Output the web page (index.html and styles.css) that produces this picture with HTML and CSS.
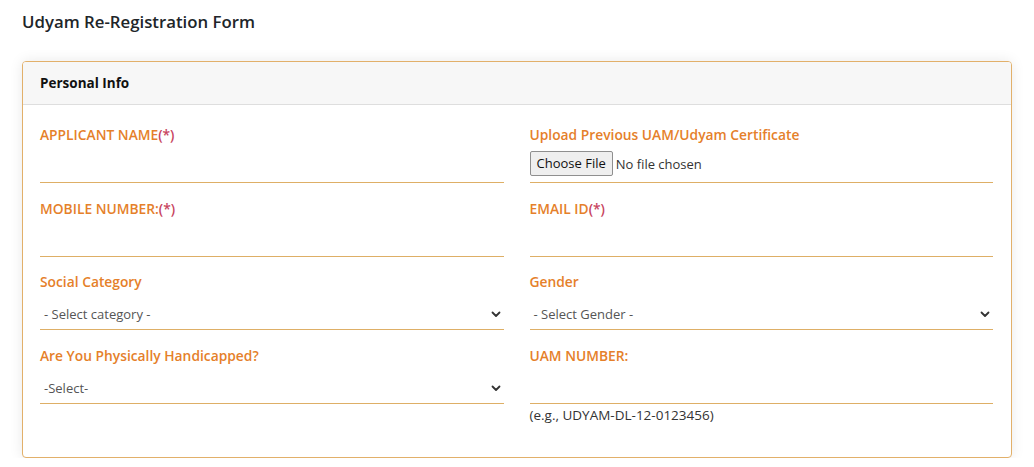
FILE: index.html
```html
<!DOCTYPE html>
<html lang="en">
<head>
<meta charset="utf-8">
<title>Udyam Re-Registration Form</title>
<link rel="stylesheet" href="styles.css">
</head>
<body>
<h1 class="page-title">Udyam Re-Registration Form</h1>
<section class="card">
  <header class="card-header">Personal Info</header>
  <div class="card-body">
    <div class="field">
      <label class="label">APPLICANT NAME<span class="req">(*)</span></label>
      <div class="control"></div>
    </div>
    <div class="field">
      <label class="label">Upload Previous UAM/Udyam Certificate</label>
      <div class="control">
        <span class="file-btn">Choose File</span>
        <span class="file-name">No file chosen</span>
      </div>
    </div>
    <div class="field">
      <label class="label">MOBILE NUMBER:<span class="req">(*)</span></label>
      <div class="control"></div>
    </div>
    <div class="field">
      <label class="label">EMAIL ID<span class="req">(*)</span></label>
      <div class="control"></div>
    </div>
    <div class="field">
      <label class="label">Social Category</label>
      <div class="control select">
        <span class="select-text">- Select category -</span>
        <svg class="chev" width="10" height="7" viewBox="0 0 10 7"><path d="M1.5 1.5 L5 5 L8.5 1.5" fill="none" stroke="#333" stroke-width="1.8" stroke-linecap="round" stroke-linejoin="round"/></svg>
      </div>
    </div>
    <div class="field">
      <label class="label">Gender</label>
      <div class="control select">
        <span class="select-text">- Select Gender -</span>
        <svg class="chev" width="10" height="7" viewBox="0 0 10 7"><path d="M1.5 1.5 L5 5 L8.5 1.5" fill="none" stroke="#333" stroke-width="1.8" stroke-linecap="round" stroke-linejoin="round"/></svg>
      </div>
    </div>
    <div class="field">
      <label class="label">Are You Physically Handicapped?</label>
      <div class="control select">
        <span class="select-text">-Select-</span>
        <svg class="chev" width="10" height="7" viewBox="0 0 10 7"><path d="M1.5 1.5 L5 5 L8.5 1.5" fill="none" stroke="#333" stroke-width="1.8" stroke-linecap="round" stroke-linejoin="round"/></svg>
      </div>
    </div>
    <div class="field">
      <label class="label">UAM NUMBER:</label>
      <div class="control"></div>
      <div class="hint">(e.g., UDYAM-DL-12-0123456)</div>
    </div>
  </div>
</section>
</body>
</html>
```
FILE: styles.css
```css
* { box-sizing: border-box; }
html, body { margin: 0; background: #fff; }
body {
  padding: 8px 22px 0;
  font-family: "Open Sans", "Noto Sans", "Liberation Sans", sans-serif;
  color: #212529;
}
.page-title {
  margin: 0 0 25px;
  font-size: 16.8px;
  line-height: 28px;
  font-weight: 600;
  color: #212529;
}
.card {
  border: 1px solid #e2b06a;
  border-radius: 4px;
  background: #fff;
  box-shadow: 0 0 14px rgba(0, 0, 0, 0.09);
  overflow: hidden;
}
.card-header {
  background: #f7f7f7;
  border-bottom: 1px solid #dedede;
  padding: 11px 17px 10px;
  font-size: 13.5px;
  line-height: 21px;
  font-weight: 700;
  color: #111;
}
.card-body {
  display: grid;
  grid-template-columns: 1fr 1fr;
  column-gap: 26px;
  padding: 19px 18px 16px 17px;
}
.field {
  display: flex;
  flex-direction: column;
  margin-bottom: 14.7px;
}
.label {
  font-size: 13.8px;
  line-height: 21px;
  font-weight: 600;
  color: #e5802a;
}
.req { color: #c8445e; }
.control {
  height: 38px;
  border-bottom: 1.5px solid #deaf66;
  display: flex;
  align-items: center;
}
.file-btn {
  font-size: 13px;
  line-height: 15px;
  padding: 4px 6px;
  background: #efefef;
  border: 1px solid #8f8f8f;
  border-radius: 2px;
  color: #111;
  margin-right: 3px;
}
.file-name {
  font-size: 13px;
  color: #333;
}
.select {
  justify-content: space-between;
  padding: 7px 3px 0 4px;
}
.select-text {
  font-size: 13px;
  color: #555;
}
.hint {
  margin-top: 1px;
  font-size: 13.5px;
  line-height: 21px;
  color: #333;
}
```
